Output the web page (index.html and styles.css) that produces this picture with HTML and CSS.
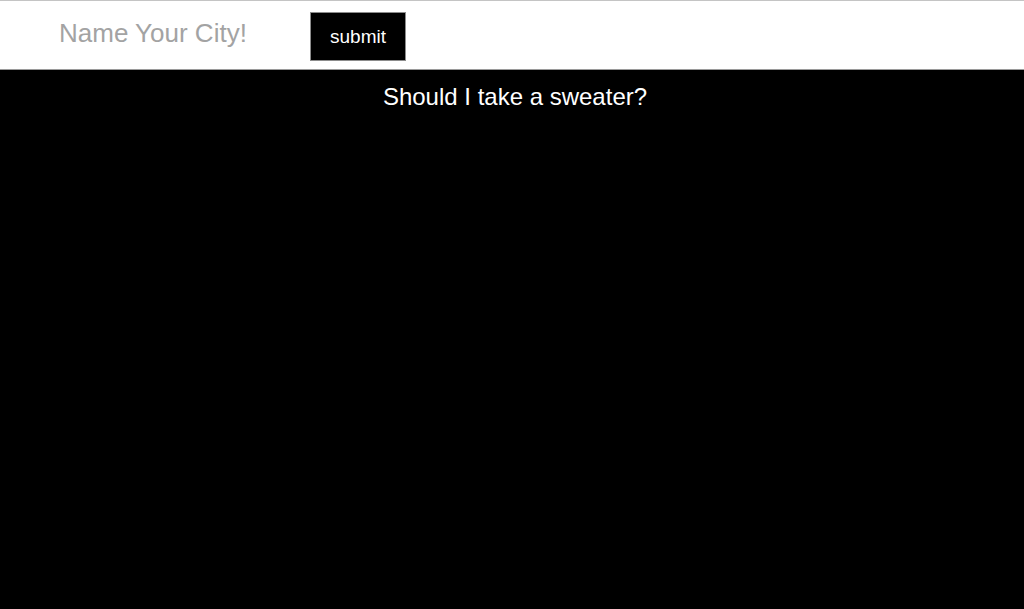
FILE: index.html
```html
<!DOCTYPE html>
<html lang="en">
  <head>
    <meta charset="UTF-8" />
    <meta name="viewport" content="width=device-width, initial-scale=1.0" />
    <title>Sweater Weather</title>
    <link rel="stylesheet" href="styles.css">
  </head>
  <body>
    <header class="search-bar">
      <form class="search-form">
        <input type="text" class="city-input" placeholder="Name Your City!" />
        <button type="submit" class="submit-btn">submit</button>
      </form>
    </header>
    <main class="content">
      <h1 class="question">Should I take a sweater?</h1>
    </main>
  </body>
</html>
```

FILE: styles.css
```css
* {
  box-sizing: border-box;
  margin: 0;
  padding: 0;
}

html,
body {
  height: 100%;
}

body {
  font-family: "Liberation Sans", Arial, Helvetica, sans-serif;
  background-color: #000000;
}

.search-bar {
  background-color: #ffffff;
  border-top: 1px solid #c4c4c4;
  border-bottom: 1px solid #9a9a9a;
  padding: 11px 0 8px 59px;
}

.search-form {
  display: flex;
  align-items: flex-start;
}

.city-input {
  width: 251px;
  height: 30px;
  margin-top: 6px;
  border: none;
  outline: none;
  background: transparent;
  font-family: inherit;
  font-size: 26px;
  color: #333333;
}

.city-input::placeholder {
  color: #a3a3a3;
}

.submit-btn {
  height: 49px;
  padding: 0 19px;
  background-color: #000000;
  color: #ffffff;
  border: 1px solid #8c8c8c;
  font-family: inherit;
  font-size: 19px;
  cursor: pointer;
}

.content {
  padding-top: 13px;
  padding-left: 6px;
}

.question {
  text-align: center;
  color: #ffffff;
  font-size: 24px;
  font-weight: normal;
  line-height: 28px;
}
```
